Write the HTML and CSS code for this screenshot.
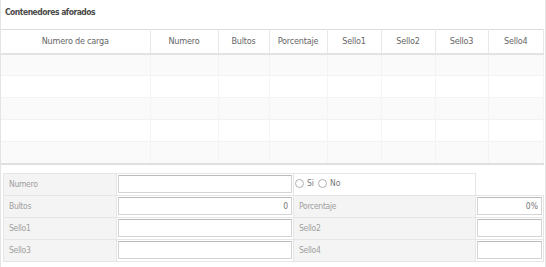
FILE: index.html
```html
<!doctype html>
<html>
<head>
<meta charset="utf-8">
<title>Contenedores aforados</title>
<link rel="stylesheet" href="styles.css">
</head>
<body>
<div class="panel">
	<div class="panel-title">Contenedores aforados</div>
	<table class="grid">
		<thead>
			<tr>
				<th class="c1">Numero de carga</th>
				<th class="c2">Numero</th>
				<th class="c3">Bultos</th>
				<th class="c4">Porcentaje</th>
				<th class="c5">Sello1</th>
				<th class="c6">Sello2</th>
				<th class="c7">Sello3</th>
				<th class="c8">Sello4</th>
			</tr>
		</thead>
		<tbody>
			<tr><td></td><td></td><td></td><td></td><td></td><td></td><td></td><td></td></tr>
			<tr><td></td><td></td><td></td><td></td><td></td><td></td><td></td><td></td></tr>
			<tr><td></td><td></td><td></td><td></td><td></td><td></td><td></td><td></td></tr>
			<tr><td></td><td></td><td></td><td></td><td></td><td></td><td></td><td></td></tr>
			<tr><td></td><td></td><td></td><td></td><td></td><td></td><td></td><td></td></tr>
		</tbody>
	</table>
	<table class="form">
		<tr>
			<td class="lbl">Numero</td>
			<td class="fld"><input type="text" value=""></td>
			<td class="opts"><label><span class="radio"></span>Si</label><label><span class="radio"></span>No</label></td>
			<td class="empty"></td>
		</tr>
		<tr>
			<td class="lbl">Bultos</td>
			<td class="fld"><input type="text" class="num" value="0"></td>
			<td class="lbl">Porcentaje</td>
			<td class="fld"><input type="text" class="num" value="0%"></td>
		</tr>
		<tr>
			<td class="lbl">Sello1</td>
			<td class="fld"><input type="text" value=""></td>
			<td class="lbl">Sello2</td>
			<td class="fld"><input type="text" value=""></td>
		</tr>
		<tr>
			<td class="lbl">Sello3</td>
			<td class="fld"><input type="text" value=""></td>
			<td class="lbl">Sello4</td>
			<td class="fld"><input type="text" value=""></td>
		</tr>
	</table>
</div>
</body>
</html>
```
FILE: styles.css
```css
*{ margin:0; padding:0; box-sizing:border-box;}
body{ background:#fff; font-family:'DejaVu Sans Condensed','DejaVu Sans',sans-serif; font-stretch:condensed; font-size:9px; color:#666;}
.panel{ width:546px; height:267px; border-left:1px solid #e4e4e4; border-right:1px solid #e4e4e4;}
.panel-title{ height:29px; line-height:24px; padding-left:4px; font-size:8.5px; font-weight:bold; color:#4a4a4a; letter-spacing:-0.5px;}
.grid{ width:543px; border-collapse:collapse; table-layout:fixed;}
.grid th{ height:24px; font-weight:normal; color:#666; border:1px solid #e8e8e8; border-top-color:#ddd; border-bottom:2px solid #e3e3e3; text-align:center; letter-spacing:-0.2px;}
.grid th:first-child{ border-left:none;}
.grid .c1{ width:149px;}
.grid .c2{ width:68px;}
.grid .c3{ width:51px;}
.grid .c4{ width:58px;}
.grid .c5{ width:54px;}
.grid .c6{ width:54px;}
.grid .c7{ width:53px;}
.grid td{ height:22px; border-left:1px solid #f4f4f4; border-right:1px solid #f4f4f4; border-bottom:1px solid #f2f2f2;}
.grid td:first-child{ border-left:none;}
.grid tbody tr:nth-child(odd){ background:#fafafa;}
.grid tbody tr:last-child td{ border-bottom:2px solid #e0e0e0;}
.form{ margin:8px 0 0 2px; width:541px; border-collapse:collapse; table-layout:fixed;}
.form td{ height:22px; border:1px solid #e6e6e6; padding:0;}
.form .lbl{ width:113px; background:#f4f4f4; color:#a0a0a0; padding-left:5px; font-size:8.5px; letter-spacing:-0.3px;}
.form tr td:nth-child(2){ width:177px;}
.form tr td:nth-child(3){ width:182px;}
.form .fld{ background:#fff; padding:1px 1px;}
.form input{ display:block; width:100%; height:18px; border:1px solid #d4d4d4; border-top-color:#bbb; background:#fff; font-family:inherit; font-size:8.5px; color:#777; padding:0 3px;}
.form input.num{ text-align:right;}
.form .opts{ background:#fff; font-size:8.5px; color:#777; padding-left:1px;}
.form .opts label{ display:inline-flex; align-items:center; margin-right:4px;}
.radio{ display:inline-block; width:9px; height:9px; border:1px solid #b0b0b0; border-radius:50%; margin-right:3px; background:#fff;}
.form .empty{ border:none; border-left:1px solid #e6e6e6; background:#fff;}
```
